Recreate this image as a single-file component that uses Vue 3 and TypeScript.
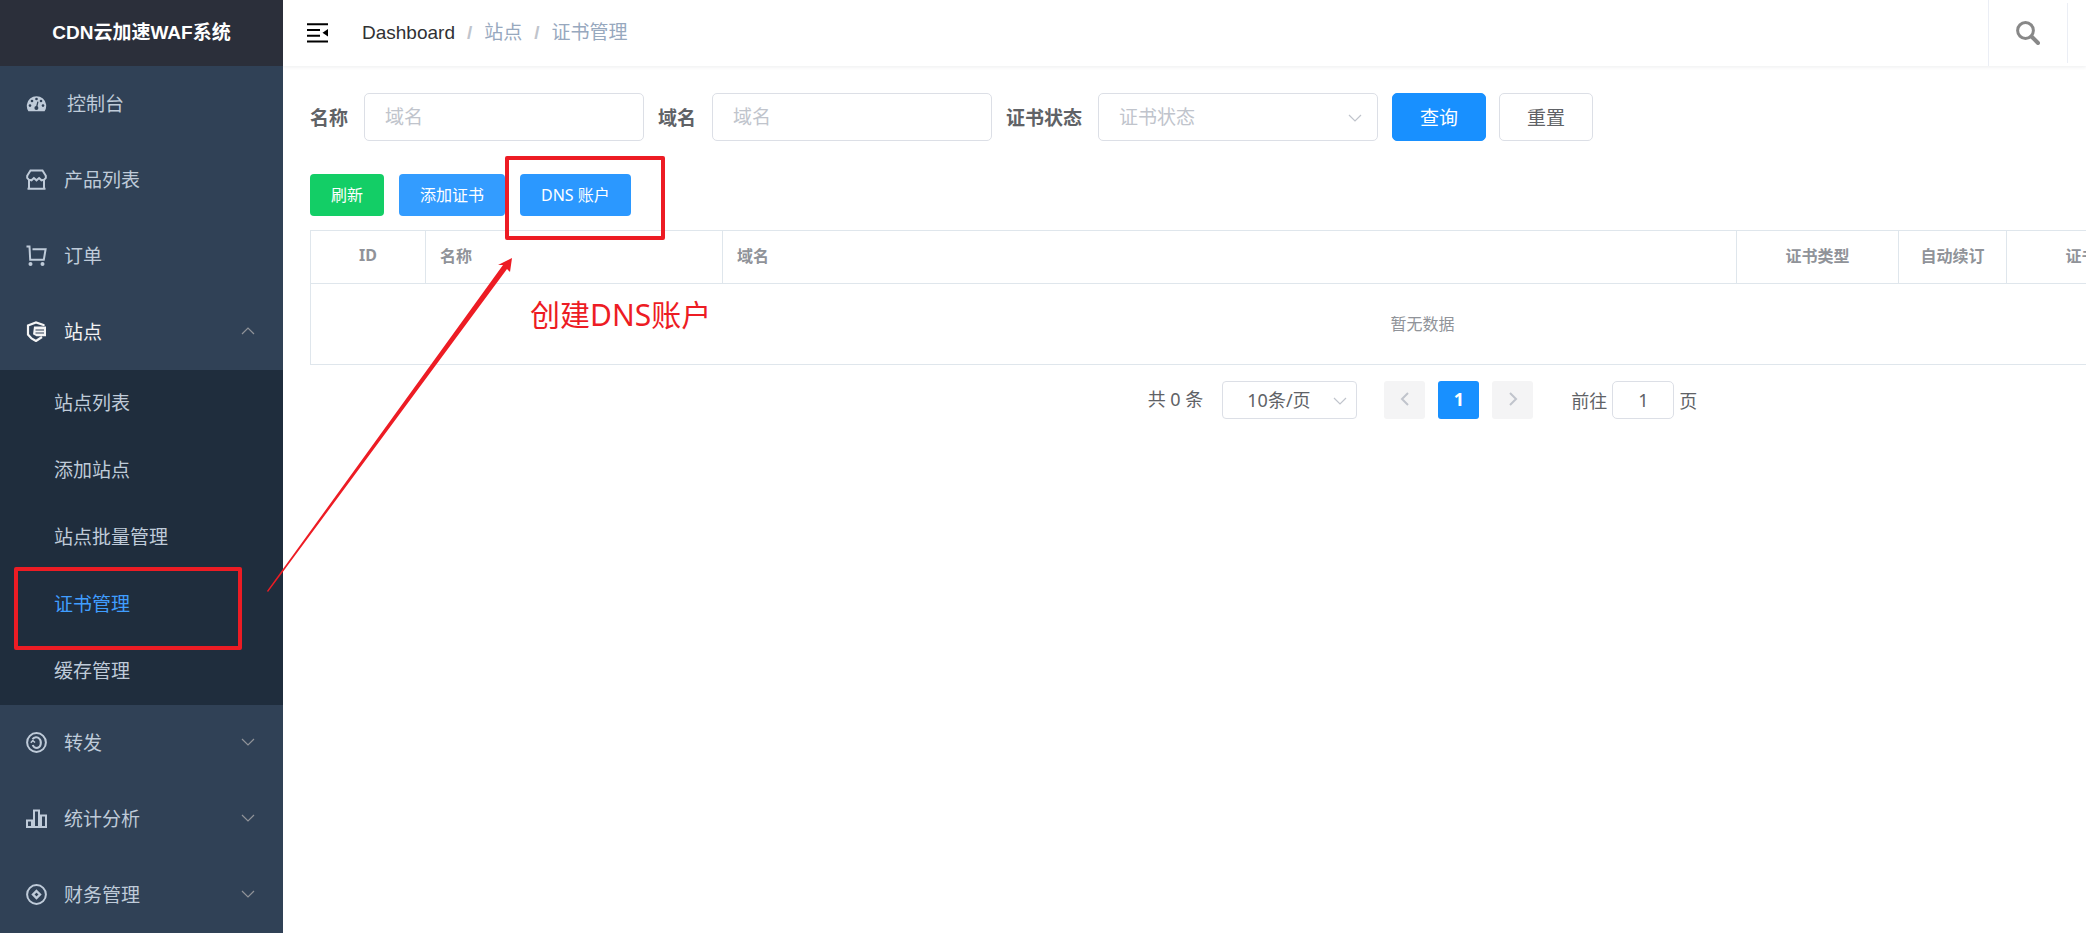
<script setup lang="ts">
import { ref } from 'vue'

interface MenuEntry {
  label: string
  icon: string
  arrow?: 'up' | 'down'
  children?: string[]
}

const menu: MenuEntry[] = [
  { label: '控制台', icon: 'gauge' },
  { label: '产品列表', icon: 'shop' },
  { label: '订单', icon: 'cart' },
  {
    label: '站点',
    icon: 'site',
    arrow: 'up',
    children: ['站点列表', '添加站点', '站点批量管理', '证书管理', '缓存管理'],
  },
  { label: '转发', icon: 'forward', arrow: 'down' },
  { label: '统计分析', icon: 'stats', arrow: 'down' },
  { label: '财务管理', icon: 'finance', arrow: 'down' },
]

const activeChild = '证书管理'
const name = ref('')
const domain = ref('')
const status = ref('')
const pageSize = ref('10')
const page = ref('1')
</script>

<template>
  <div class="layout">
    <aside class="sidebar">
      <h1 class="brand">CDN云加速WAF系统</h1>
      <nav>
        <template v-for="item in menu" :key="item.label">
          <a href="#" class="item" :class="[item.icon, { open: item.children }]">
            <svg v-if="item.icon === 'gauge'" class="icon" viewBox="0 0 21 21">
              <path fill="currentColor" d="M2.400 18.200A9.700 9.700 0 1 1 18.600 18.200Z" />
              <g fill="#304156">
                <circle cx="4" cy="12.600" r="1.300" />
                <circle cx="6" cy="8" r="1.300" />
                <circle cx="10.500" cy="6" r="1.300" />
                <circle cx="15" cy="8" r="1.300" />
                <circle cx="17" cy="12.600" r="1.300" />
                <circle cx="10.400" cy="15" r="2" />
              </g>
              <path d="M10.400 15 11.800 9.200" stroke="#304156" stroke-width="1.300" stroke-linecap="round" />
            </svg>
            <svg v-else-if="item.icon === 'shop'" class="icon line" viewBox="0 0 21 21">
              <path d="M4.500 1.500h12l3.300 5.200v2.200l-1.600 1.800-2.700.600-2.400-2.300-2.600 2.300-2.600-2.300-2.400 2.300-2.700-.600L1.200 8.900V6.700ZM3 11v8.700M18 11v8.700M1.500 19.800h18" />
            </svg>
            <svg v-else-if="item.icon === 'cart'" class="icon line" viewBox="0 0 21 21">
              <path d="M.500 1.500h3l.700 13.300h13.600l1.800-10.600H6.500" />
              <circle cx="4.500" cy="19" r="2" class="solid" />
              <circle cx="16.500" cy="19" r="2" class="solid" />
            </svg>
            <svg v-else-if="item.icon === 'site'" class="icon line" viewBox="0 0 21 21">
              <path stroke-width="2.200" d="M17.500 5V4L10 1.500 2 4.500v9l3.500 4L10 20l6-4" />
              <path class="solid" d="M8 5.500h12v9.800h-9.500L7 13.300Z" />
              <path stroke="#304156" stroke-width="1.200" d="M9.500 9H18M9.500 12H18" />
            </svg>
            <svg v-else-if="item.icon === 'forward'" class="icon line" viewBox="0 0 21 21">
              <circle cx="10.500" cy="10.500" r="9.400" />
              <path d="M6.500 7.200c1.700-2.300 5-2.600 6.800-.600 2.600 2.600 2 9-2.300 9.400-2.200 0-3.700-1.300-4.300-3" />
              <path stroke-width="1.500" d="m4.800 10.800 2-2.300 2.200 2" />
            </svg>
            <svg v-else-if="item.icon === 'stats'" class="icon line" viewBox="0 0 21 21">
              <path d="M1 12.500h5v6.500H1ZM8 2.500h5v16.500H8ZM15 7.500h5v11.500h-5Z" />
            </svg>
            <svg v-else class="icon line" viewBox="0 0 21 21">
              <circle cx="10.500" cy="10.500" r="9.400" />
              <path stroke-width="2.400" d="m10.500 7 3.500 3.500-3.500 3.500L7 10.500Z" />
            </svg>
            <span class="label">{{ item.label }}</span>
            <svg v-if="item.arrow" class="arrow" viewBox="0 0 14 14">
              <path :d="item.arrow === 'up' ? 'M1 10l6-6 6 6' : 'M1 4l6 6 6-6'" />
            </svg>
          </a>
          <div v-if="item.children" class="submenu">
            <a
              v-for="child in item.children"
              :key="child"
              href="#"
              class="child"
              :class="{ active: child === activeChild }"
            >{{ child }}</a>
          </div>
        </template>
      </nav>
    </aside>

    <main class="main">
      <header class="topbar">
        <button class="fold" type="button" aria-label="菜单">
          <svg viewBox="0 0 21 20">
            <path d="M0 1.200h21M0 7h13M0 12.700h13M0 18.500h21" stroke="#000" stroke-width="2" />
            <path d="M15.500 9.800 21 6v7.600Z" fill="#000" />
          </svg>
        </button>
        <nav class="crumbs">
          <a href="#" class="home">Dashboard</a>
          <span class="sep">/</span>
          <span>站点</span>
          <span class="sep">/</span>
          <span>证书管理</span>
        </nav>
        <div class="tools">
          <button class="search" type="button" aria-label="搜索">
            <svg viewBox="0 0 24 24">
              <circle cx="9.500" cy="9.500" r="7.900" />
              <path d="M15.500 15.500 22 22" stroke-linecap="round" stroke-width="4" />
            </svg>
          </button>
        </div>
      </header>

      <section class="content">
        <form class="filters" @submit.prevent>
          <label for="f-name">名称</label>
          <input id="f-name" v-model="name" class="field" type="text" placeholder="域名" />
          <label for="f-domain">域名</label>
          <input id="f-domain" v-model="domain" class="field" type="text" placeholder="域名" />
          <label for="f-status">证书状态</label>
          <span class="pick">
            <select id="f-status" v-model="status" class="field empty">
              <option value="">证书状态</option>
            </select>
            <svg class="caret" viewBox="0 0 14 14"><path d="M1 4l6 6 6-6" /></svg>
          </span>
          <button class="btn primary" type="submit">查询</button>
          <button class="btn" type="reset">重置</button>
        </form>

        <div class="actions">
          <button class="small green" type="button">刷新</button>
          <button class="small blue" type="button">添加证书</button>
          <button class="small blue strong" type="button">DNS 账户</button>
        </div>

        <table class="grid">
          <colgroup>
            <col class="c-id" />
            <col class="c-name" />
            <col class="c-domain" />
            <col class="c-type" />
            <col class="c-renew" />
            <col class="c-status" />
            <col class="c-rest" />
          </colgroup>
          <thead>
            <tr>
              <th>ID</th>
              <th class="left">名称</th>
              <th class="left">域名</th>
              <th>证书类型</th>
              <th>自动续订</th>
              <th>证书状态</th>
              <th></th>
            </tr>
          </thead>
          <tbody>
            <tr>
              <td colspan="7">暂无数据</td>
            </tr>
          </tbody>
        </table>

        <div class="pager">
          <span class="total">共 0 条</span>
          <span class="pick size">
            <select v-model="pageSize" aria-label="每页条数">
              <option value="10">10条/页</option>
            </select>
            <svg class="caret" viewBox="0 0 14 14"><path d="M1 4l6 6 6-6" /></svg>
          </span>
          <div class="pages">
            <button type="button" disabled aria-label="上一页">
              <svg viewBox="0 0 14 14"><path d="M10 1 4 7l6 6" /></svg>
            </button>
            <button type="button" class="current">1</button>
            <button type="button" disabled aria-label="下一页">
              <svg viewBox="0 0 14 14"><path d="m4 1 6 6-6 6" /></svg>
            </button>
          </div>
          <label class="jump">前往<input v-model="page" type="text" />页</label>
        </div>
      </section>
    </main>

    <div class="mark mark-menu"></div>
    <div class="mark mark-button"></div>
    <svg class="pointer" viewBox="0 0 246 334">
      <path d="M0 333 236 7l-4 0-1 0L245 0l-2 14-3-3L1 334Z" />
    </svg>
    <p class="note">创建DNS账户</p>
  </div>
</template>

<style>
body {
  margin: 0;
}
</style>

<style scoped>
* {
  box-sizing: border-box;
}

.layout {
  position: relative;
  display: flex;
  height: 100vh;
  overflow: hidden;
  background: #fff;
  color: #606266;
  font-family: "Noto Sans", "Noto Sans CJK SC", sans-serif;
  font-size: 19px;
}

button,
input,
select {
  font: inherit;
  color: inherit;
}

button {
  padding: 0;
  cursor: pointer;
}

a {
  color: inherit;
  text-decoration: none;
}

svg {
  display: block;
  fill: none;
}

/* Sidebar */
.sidebar {
  flex: none;
  width: 283px;
  overflow: hidden;
  background: #304156;
  color: #bfcbd9;
}

.brand {
  margin: 0;
  height: 66px;
  background: #2b2f3a;
  color: #fff;
  font: bold 19px/66px "Liberation Sans", "Noto Sans CJK SC", sans-serif;
  text-align: center;
}

.item {
  display: flex;
  align-items: center;
  height: 76px;
  padding: 0 28px 2px 26px;
}

.item.open {
  color: #f4f4f5;
}

.icon {
  width: 21px;
  height: 21px;
  margin-right: 17px;
}

.gauge .icon {
  margin-right: 20px;
}

.line {
  stroke: currentColor;
  stroke-width: 2;
}

.solid {
  fill: currentColor;
  stroke: none;
}

.label {
  flex: 1;
}

.arrow {
  width: 14px;
  height: 14px;
  stroke: #909399;
  stroke-width: 1.2;
}

.submenu {
  background: #1f2d3d;
  color: #bfcbd9;
}

.child {
  display: block;
  height: 67px;
  padding-left: 54px;
  line-height: 67px;
}

.child.active {
  color: #409eff;
}

/* Top bar */
.main {
  flex: 1;
  min-width: 0;
  overflow: hidden;
}

.topbar {
  display: flex;
  align-items: center;
  height: 66px;
  padding-left: 24px;
  box-shadow: 0 1px 4px rgba(0, 21, 41, 0.08);
}

.fold {
  width: 21px;
  margin-right: 34px;
  border: 0;
  background: none;
}

.crumbs {
  display: flex;
  align-items: baseline;
  color: #97a8be;
  font-family: "Liberation Sans", "Noto Sans CJK SC", sans-serif;
  line-height: 24px;
}

.home {
  color: #303133;
}

.sep {
  margin: 0 12px;
  color: #c0c4cc;
  font-weight: bold;
}

.tools {
  display: flex;
  align-self: stretch;
  margin-left: auto;
  padding-right: 18px;
  border-left: 1px solid #ebeef5;
}

.search {
  display: flex;
  align-items: center;
  justify-content: center;
  width: 79px;
  height: 60px;
  margin: 3px 0;
  border: 0;
  border-right: 1px solid #ebeef5;
  background: none;
}

.search svg {
  width: 24px;
  height: 24px;
  stroke: #888;
  stroke-width: 3;
}

/* Content */
.content {
  width: 100%;
  min-width: 2252px;
  padding: 27px 0 0 27px;
}

.filters {
  display: flex;
  align-items: center;
}

.filters label {
  margin-right: 16px;
  font-weight: bold;
}

.field {
  width: 280px;
  height: 48px;
  margin-right: 14px;
  padding: 0 20px;
  border: 1px solid #dcdfe6;
  border-radius: 5px;
  background: #fff;
}

.field::placeholder {
  color: #c0c4cc;
  opacity: 1;
}

.pick {
  position: relative;
  display: flex;
}

.pick select {
  appearance: none;
}

.pick .empty {
  color: #c0c4cc;
}

.caret {
  position: absolute;
  top: 18px;
  right: 30px;
  width: 14px;
  height: 14px;
  stroke: #c0c4cc;
  stroke-width: 1.2;
  pointer-events: none;
}

.btn {
  width: 94px;
  height: 48px;
  margin-right: 13px;
  border: 1px solid #dcdfe6;
  border-radius: 5px;
  background: #fff;
}

.btn.primary {
  border-color: #1890ff;
  background: #1890ff;
  color: #fff;
}

.actions {
  display: flex;
  gap: 15px;
  margin: 33px 0 14px;
}

.small {
  height: 42px;
  padding: 0 21px 2px;
  border: 0;
  border-radius: 4px;
  color: #fff;
  font-size: 16px;
}

.green {
  background: #13ce66;
}

.blue {
  background: #339cff;
}

.strong {
  background: #2b98ff;
}

.grid {
  width: 100%;
  table-layout: fixed;
  border-collapse: collapse;
  color: #909399;
  font-size: 16px;
  text-align: center;
}

.grid th,
.grid td {
  padding: 0 14px 2px;
  border: 1px solid #dfe6ec;
}

.grid th {
  height: 53px;
  padding-bottom: 4px;
}

.grid td {
  height: 81px;
}

.grid .left {
  text-align: left;
}

.c-id {
  width: 115px;
}

.c-name {
  width: 297px;
}

.c-type {
  width: 162px;
}

.c-renew {
  width: 108px;
}

.c-status {
  width: 182px;
}

.c-rest {
  width: 346px;
}

/* Pagination */
.pager {
  display: flex;
  align-items: center;
  justify-content: center;
  margin-top: 16px;
  font-size: 18px;
}

.total {
  padding-bottom: 4px;
}

.size {
  margin: 0 27px 0 19px;
}

.size select {
  width: 135px;
  height: 38px;
  padding: 0 24px;
  border: 1px solid #dcdfe6;
  border-radius: 4px;
  background: #fff;
}

.size .caret {
  top: 13px;
  right: 10px;
}

.pages {
  display: flex;
  gap: 13px;
}

.pages button {
  display: flex;
  align-items: center;
  justify-content: center;
  width: 41px;
  height: 38px;
  padding-bottom: 2px;
  border: 0;
  border-radius: 3px;
  background: #f4f4f5;
  font-weight: bold;
}

.pages .current {
  background: #1890ff;
  color: #fff;
}

.pages svg {
  width: 14px;
  height: 14px;
  stroke: #c0c4cc;
  stroke-width: 2;
}

.jump {
  display: flex;
  align-items: center;
  margin-left: 38px;
}

.jump input {
  width: 62px;
  height: 38px;
  margin: 0 5px;
  padding: 0;
  border: 1px solid #dcdfe6;
  border-radius: 5px;
  text-align: center;
}

/* Tutorial marks drawn over the page */
.mark {
  position: absolute;
  border: 4px solid #ed1c24;
  border-radius: 2px;
  pointer-events: none;
}

.mark-menu {
  left: 14px;
  top: 567px;
  width: 228px;
  height: 83px;
}

.mark-button {
  left: 505px;
  top: 156px;
  width: 160px;
  height: 84px;
}

.pointer {
  position: absolute;
  left: 267px;
  top: 258px;
  width: 246px;
  height: 334px;
  fill: #ed1c24;
  pointer-events: none;
}

.note {
  position: absolute;
  left: 530px;
  top: 294px;
  margin: 0;
  color: #ed1c24;
  font-size: 30px;
  line-height: 42px;
}
</style>
